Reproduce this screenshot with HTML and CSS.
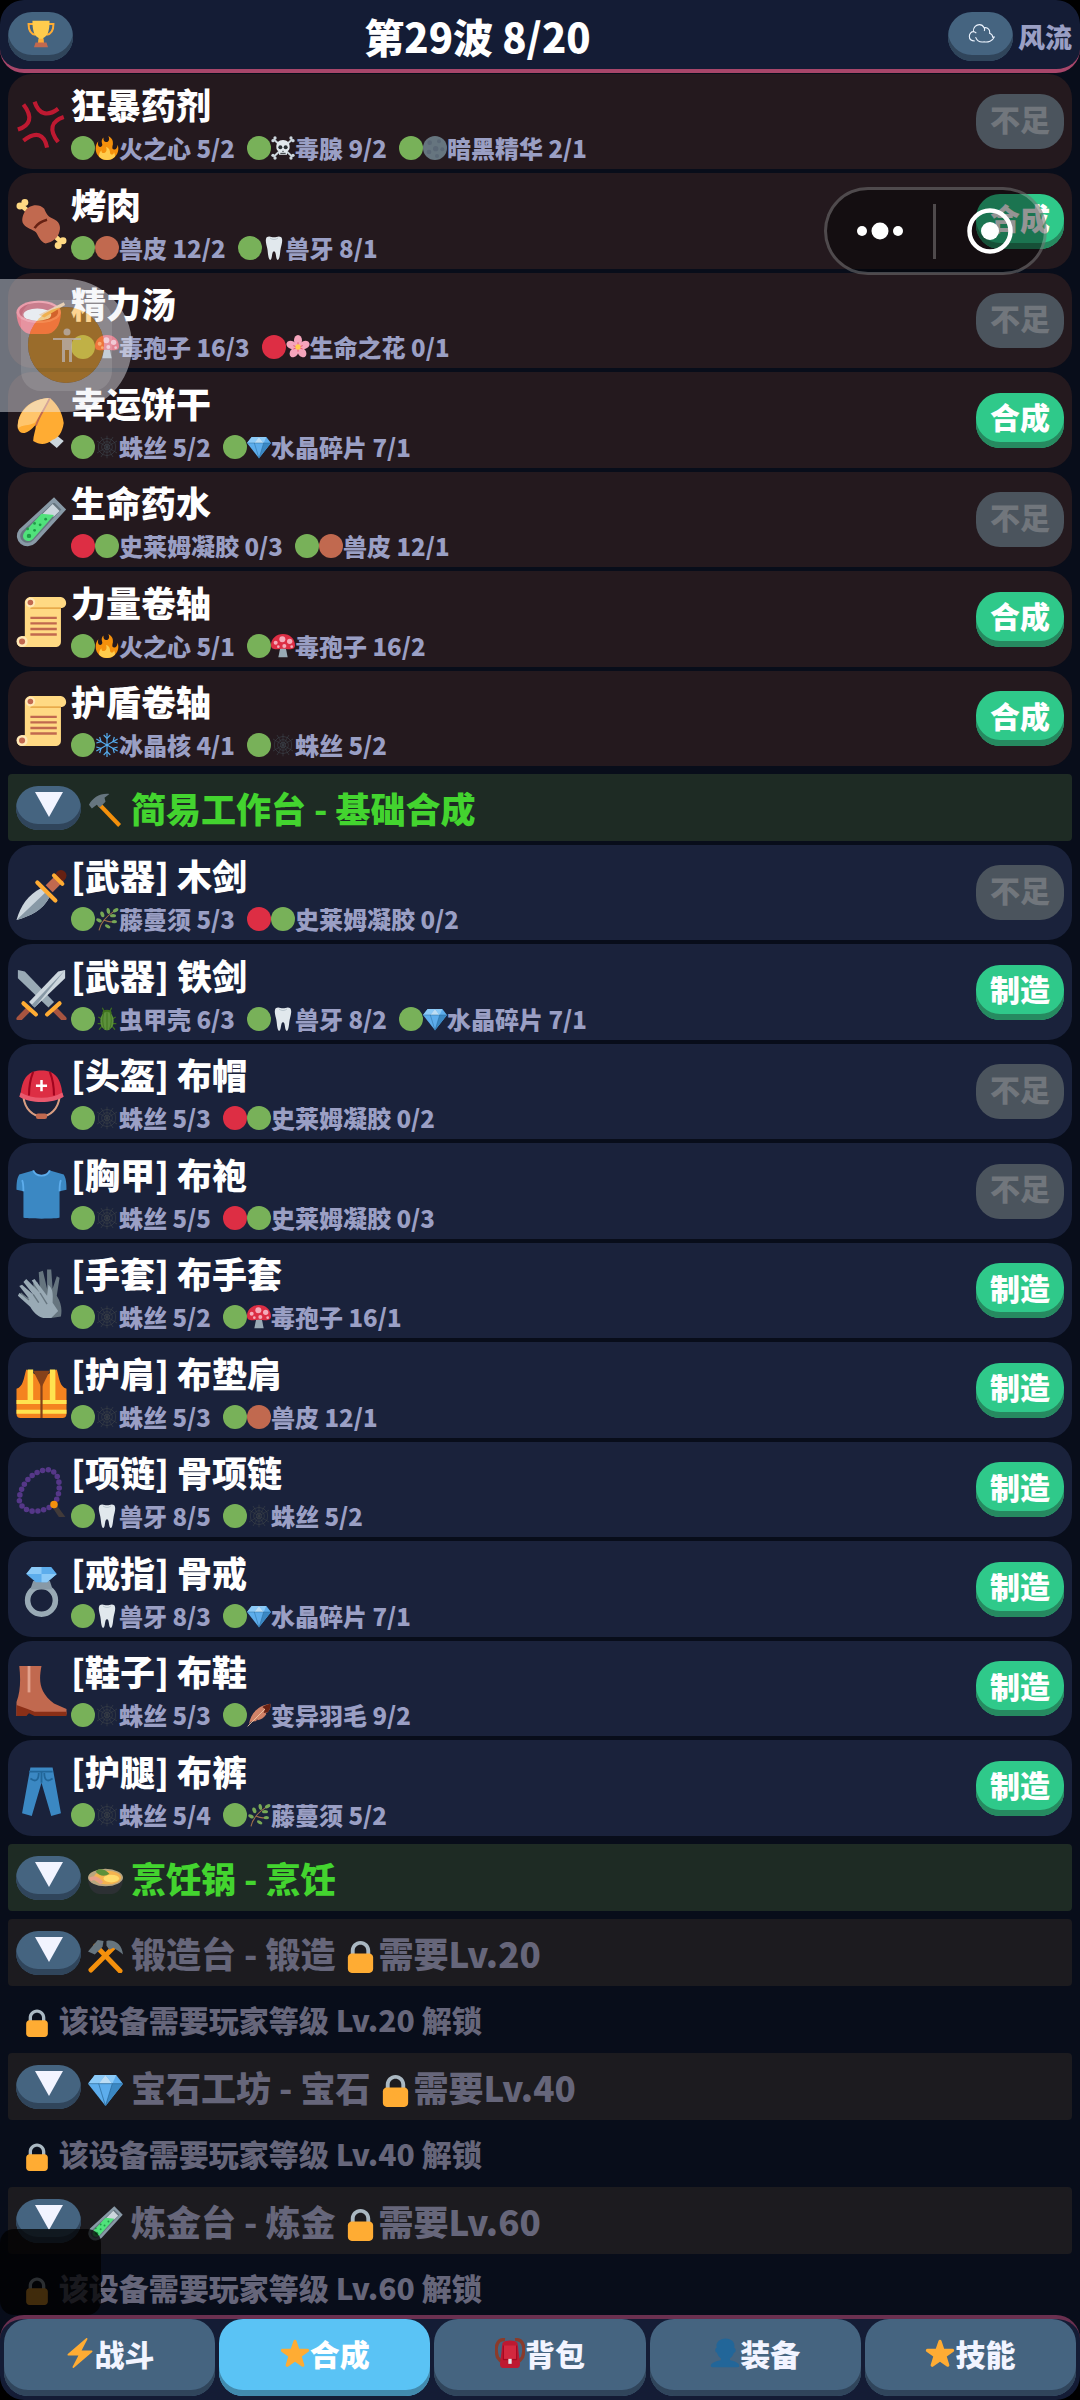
FILE: index.html
```html
<!DOCTYPE html>
<html lang="zh-CN">
<head>
<meta charset="utf-8">
<meta name="viewport" content="width=device-width, initial-scale=1">
<title>第29波 - 合成</title>
<link rel="stylesheet" href="styles.css">
</head>
<body>
<svg class="sprite" aria-hidden="true">
  <symbol id="trophy" viewBox="0 0 36 36"><path d="M8 5H2c0 9 3 13 9 14M28 5h6c0 9-3 13-9 14" fill="none" stroke="#ffac33" stroke-width="2.6"/><path d="M7 1h22c0 12-2 20-8 22v5h-6v-5C9 21 7 13 7 1z" fill="#ffcc4d"/><path d="M15 24h6l1 6h-8z" fill="#ffac33"/><path d="M11 29h14l2 6H9z" fill="#c1694f"/></symbol>
  <symbol id="cloud" viewBox="0 0 36 36"><path d="M10 27c-4 0-7-2-7-6s3-6 5-6c0-6 4-9 8-9 3 0 5 2 6 4 5-1 8 3 7 7 3 1 4 3 4 5l2 0c-2 5-8 7-13 6-5 1-9-1-11-6M8 15c2 0 3 1 4 2M22 10c1 2 1 3 0 4" fill="none" stroke="#eef5ff" stroke-width="1.4"/></symbol>
  <symbol id="tri" viewBox="0 0 28 25"><path d="M0 0h28L14 25z" fill="#f2f4ff"/></symbol>
  <symbol id="anger" viewBox="0 0 36 36"><g fill="none" stroke="#be1931" stroke-width="3"><path d="M13 2c3 9 9 11 17 5"/><path d="M34 13c-9 3-11 9-4 18"/><path d="M22 35c-2-10-8-12-17-5"/><path d="M1 22c9-3 11-9 4-18"/></g></symbol>
  <symbol id="meat" viewBox="0 0 36 36"><path d="M4 5l8 7M26 25l7 7" stroke="#ffd983" stroke-width="3.4"/><g fill="#ffd983"><circle cx="2.500" cy="5" r="2.500"/><circle cx="6" cy="2.500" r="2.500"/><circle cx="33.500" cy="30" r="2.500"/><circle cx="30" cy="33.500" r="2.500"/></g><path d="M6 9c3-5 10-6 14-2 1 3 3 6 6 7 5 2 6 6 5 9-1 5-5 8-10 9-4-1-5-5-7-8-2-2-7-3-9-6-2-3 0-7 1-9z" fill="#c1694f"/><path d="M13 21c2-3 5-5 9-6" fill="none" stroke="#662113" stroke-width="1.8"/></symbol>
  <symbol id="bowl" viewBox="0 0 36 36"><path d="M0 10h32c0 10-5 16-11 16H11C5 26 0 20 0 10z" fill="#dd2e44"/><ellipse cx="16" cy="10" rx="16" ry="8" fill="#ea596e"/><ellipse cx="16" cy="10" rx="14" ry="6.500" fill="#a0041e"/><ellipse cx="15" cy="12" rx="10" ry="4.500" fill="#e1e8ed"/><path d="M16 12L34 3l1 2-15 9z" fill="#e0b070"/></symbol>
  <symbol id="cookie" viewBox="0 0 36 36"><path d="M22 30l7-3 5 4-5 5z" fill="#ccd6dd"/><path d="M1 22C0 10 10 0 24 0c5 4 9 10 10 18-1 7-4 11-8 12-5 4-9 4-14 1 0-4 2-8 2-12-5 6-11 9-13 3z" fill="#ffac33"/><path d="M24 0C12 0 0 10 1 22c3-3 8-2 12-4C17 13 20 7 24 0z" fill="#ffc56b"/><path d="M24 0c-3 7-8 13-10 20" fill="none" stroke="#c1694f" stroke-width="1.300"/></symbol>
  <symbol id="tube" viewBox="0 0 36 36"><path d="M27 2l7 7-21 23c-6 6-15-1-10-8z" fill="#66757f" stroke="#8899a6" stroke-width="2.500"/><path d="M26 5l5 5-4 4-9-1z" fill="#ccd6dd"/><path d="M18 12l9 1-15 17c-4 4-10 0-6-5z" fill="#50e27b"/><g fill="#1f9b48"><circle cx="9" cy="28" r="1.600"/><circle cx="13" cy="24" r="1"/><circle cx="17" cy="20" r="1"/><circle cx="13" cy="19" r="1"/><circle cx="21" cy="16" r="1"/><circle cx="8" cy="23" r="1"/></g></symbol>
  <symbol id="scroll" viewBox="0 0 36 36"><path d="M10 0h22c5 1 5 8 0 8v24c0 3-2 4-4 4H4c-5 0-5-8 2-8V4c0-2 2-4 4-4z" fill="#ffd983"/><path d="M10 8h22" stroke="#e39f3d"/><circle cx="10" cy="4" r="3.500" fill="#ffe8b6"/><circle cx="10" cy="4" r="2" fill="#c1694f"/><circle cx="4" cy="32" r="4" fill="#ffe8b6"/><circle cx="4" cy="32" r="2.200" fill="#c1694f"/><path d="M10 15h19M10 19h19M10 23h19M10 27h19" stroke="#c1694f" stroke-width="1.700"/></symbol>
  <symbol id="fire" viewBox="0 0 36 36"><path fill="#f4900c" d="M35 19c0-2.062-.367-4.039-1.040-5.868-.46 5.389-3.333 8.157-6.335 6.868-2.812-1.208-.917-5.917-.777-8.164.236-3.809-.012-8.169-6.931-11.794 2.875 5.500.333 8.917-2.333 9.125-2.958.231-5.667-2.542-4.667-7.042-3.238 2.386-3.332 6.402-2.333 9 1.042 2.708-.042 4.958-2.583 5.208-2.840.28-4.418-3.041-2.963-8.333C2.520 10.965 1 14.805 1 19c0 9.389 7.611 17 17 17s17-7.611 17-17z"/><path fill="#ffcc4d" d="M28.394 23.999c.148 3.084-2.561 4.293-4.019 3.709-2.106-.843-1.541-2.291-2.083-5.291s-2.625-5.083-5.708-6c2.250 6.333-1.247 8.667-3.080 9.084-1.872.426-3.753-.001-3.968-4.007C7.352 23.668 6 26.676 6 30c0 .368.023.73.055 1.090C9.125 34.124 13.342 36 18 36s8.875-1.876 11.945-4.910c.032-.36.055-.722.055-1.090 0-2.187-.584-4.236-1.606-6.001z"/></symbol>
  <symbol id="skull" viewBox="0 0 36 36"><path d="M4 5l28 26M32 5L4 31" stroke="#ccd6dd" stroke-width="3"/><g fill="#ccd6dd"><circle cx="3" cy="7" r="2.500"/><circle cx="6" cy="3" r="2.500"/><circle cx="33" cy="7" r="2.500"/><circle cx="30" cy="3" r="2.500"/><circle cx="3" cy="29" r="2.500"/><circle cx="6" cy="33" r="2.500"/><circle cx="33" cy="29" r="2.500"/><circle cx="30" cy="33" r="2.500"/></g><path d="M18 6c7 0 10 5 10 10 0 4-1 6-4 7v5H12v-5c-3-1-4-3-4-7 0-5 3-10 10-10z" fill="#e1e8ed"/><circle cx="14" cy="17" r="3" fill="#292f33"/><circle cx="22" cy="17" r="3" fill="#292f33"/><path d="M17 23h2M14 26h8" stroke="#292f33" stroke-width="1.500"/></symbol>
  <symbol id="moon" viewBox="0 0 36 36"><circle cx="18" cy="18" r="18" fill="#66757f"/><g fill="#5b6876"><circle cx="10" cy="10" r="3.500"/><circle cx="24" cy="8" r="3"/><circle cx="19" cy="19" r="4"/><circle cx="29" cy="20" r="3"/><circle cx="9" cy="24" r="3.500"/><circle cx="21" cy="30" r="3"/></g></symbol>
  <symbol id="tooth" viewBox="0 0 36 36"><path d="M7 2c4-3 7 0 11 0s7-3 11 0c3 4 0 12-1 17s-1 15-4 17c-4 0-2-13-6-13s-2 13-6 13c-3-2-3-12-4-17S4 6 7 2z" fill="#e1e8ed"/><path d="M12 3c4 3 8 3 12 0" fill="none" stroke="#bdc9d1" stroke-width="1.500"/></symbol>
  <symbol id="mushroom" viewBox="0 0 36 36"><path d="M14 20h8l3 15H11z" fill="#99aab5"/><path d="M0 17C0 7 8 0 18 0s18 7 18 17c0 9-13 5-18 5S0 26 0 17z" fill="#dd2e44"/><g fill="#f4abba"><circle cx="17" cy="8" r="4.500"/><circle cx="7" cy="13" r="3"/><circle cx="28" cy="11" r="4"/><circle cx="20" cy="18" r="3"/><circle cx="11" cy="19" r="2"/><circle cx="31" cy="19" r="2"/></g></symbol>
  <symbol id="blossom" viewBox="0 0 36 36"><g fill="#f5a4bb"><ellipse cx="18" cy="8" rx="6" ry="8"/><ellipse cx="18" cy="8" rx="6" ry="8" transform="rotate(72 18 18)"/><ellipse cx="18" cy="8" rx="6" ry="8" transform="rotate(144 18 18)"/><ellipse cx="18" cy="8" rx="6" ry="8" transform="rotate(216 18 18)"/><ellipse cx="18" cy="8" rx="6" ry="8" transform="rotate(288 18 18)"/></g><path d="M18 11v14M11 16l14 5M25 16l-14 5" stroke="#ea596e" stroke-width="1.500"/><circle cx="18" cy="18" r="4" fill="#ffcc4d"/></symbol>
  <symbol id="web" viewBox="0 0 36 36"><g fill="none" stroke="#3a4047" stroke-width="1"><path d="M18 1v34M3 9l30 18M3 27L33 9M9 3l18 30M27 3L9 33"/><circle cx="18" cy="18" r="4"/><circle cx="18" cy="18" r="8"/><path d="M18 5l7 2 5 5 1 6-1 6-5 5-7 2-7-2-5-5-1-6 1-6 5-5z"/></g></symbol>
  <symbol id="gem" viewBox="0 0 36 36"><path d="M7 3h22l7 9-18 23L0 12z" fill="#5dadec"/><path d="M7 3h11l-7 9H0z" fill="#8ccaf7"/><path d="M18 3l7 9H11z" fill="#bdddf4"/><path d="M18 3h11l-4 9z" fill="#8ccaf7"/><path d="M11 12h14l-7 23z" fill="#5dadec"/><path d="M25 12h11L18 35z" fill="#3b88c3"/><path d="M0 12h36M11 12l7 23 7-23" fill="none" stroke="#2a6797" stroke-width=".7"/></symbol>
  <symbol id="snow" viewBox="0 0 36 36"><g fill="none" stroke="#55acee" stroke-width="1.800"><path d="M18 0v36M2 9l32 18M2 27L34 9"/><path d="M13 3l5 5 5-5M13 33l5-5 5 5M2 15l7-2-2-7M34 21l-7 2 2 7M2 21l7 2-2 7M34 15l-7-2 2-7"/></g></symbol>
  <symbol id="herb" viewBox="0 0 36 36"><path d="M6 35c2-9 8-19 22-28M14 20c5 2 8 3 12 2" fill="none" stroke="#a0714a" stroke-width="1.600"/><g fill="#77a856"><ellipse cx="6" cy="20" rx="4.500" ry="2.600" transform="rotate(25 6 20)"/><ellipse cx="11" cy="11" rx="2.800" ry="4.500" transform="rotate(-20 11 11)"/><ellipse cx="20" cy="6" rx="2.600" ry="4.500" transform="rotate(-10 20 6)"/><ellipse cx="31" cy="5" rx="4.500" ry="2.600" transform="rotate(-30 31 5)"/><ellipse cx="27" cy="13" rx="4.500" ry="2.400"/><ellipse cx="19" cy="29" rx="4.500" ry="2.400" transform="rotate(30 19 29)"/><ellipse cx="29" cy="22" rx="4" ry="2.400"/></g></symbol>
  <symbol id="beetle" viewBox="0 0 36 36"><path d="M11 1l3 6M25 1l-3 6M5 15l5 3M31 15l-5 3M4 25h6M32 25h-6M6 34l5-6M30 34l-5-6" stroke="#3e721d" stroke-width="1.800"/><ellipse cx="18" cy="9" rx="7" ry="5" fill="#3e721d"/><ellipse cx="18" cy="21" rx="10" ry="14" fill="#5c913b"/><path d="M18 8v27M13 9c-2 8-2 16 1 24M23 9c2 8 2 16-1 24" fill="none" stroke="#3e721d" stroke-width="1.300"/></symbol>
  <symbol id="feather" viewBox="0 0 36 36"><path d="M3 32C5 17 15 4 35 1c1 7-2 10-4 13l-3 1 1 2c-4 6-8 8-13 9l-1-2-1 3c-3 1-5 1-8 1z" fill="#d08268"/><path d="M35 1c1 7-2 10-4 13l-6 1 2-6-4-3c4-3 8-4 12-5z" fill="#662113"/><path d="M1 35L27 9" stroke="#f0c9a6" stroke-width="1.300"/></symbol>
  <symbol id="hammer" viewBox="0 0 36 36"><path d="M13 10l21 22-3 3L10 13z" fill="#f4900c"/><path d="M1 12C5 5 12 0 22 1l-5 4 1 4-6 6-3-3-5 4z" fill="#66757f"/></symbol>
  <symbol id="picks" viewBox="0 0 36 36"><path d="M8 8l25 26M27 9L3 33" stroke="#f4900c" stroke-width="5" stroke-linecap="round"/><path d="M0 14L10 2l6 1-1 6-8 8z" fill="#66757f"/><path d="M19 3c9-2 16 4 17 14-3-3-7-5-10-7l-4 2-3-4z" fill="#66757f"/></symbol>
  <symbol id="pot" viewBox="0 0 36 36"><path d="M0 16h36c0 9-5 15-11 16H11C5 31 0 25 0 16z" fill="#2c3033"/><ellipse cx="18" cy="15" rx="18" ry="9" fill="#b9a680"/><ellipse cx="20" cy="15" rx="14" ry="7" fill="#f4b350"/><ellipse cx="24" cy="16" rx="8" ry="4" fill="#ffdc6c"/><path d="M8 9c3-4 9-3 14 2-4 3-10 3-14-2z" fill="#5c913b"/><path d="M2 17c5-3 9 0 12 4" fill="none" stroke="#e6a08a" stroke-width="4"/></symbol>
  <symbol id="lock" viewBox="0 0 36 36"><path fill="#aab8c2" d="M18 3C12.477 3 8 7.477 8 13v10h4V13c0-3.313 2.686-6 6-6s6 2.687 6 6v10h4V13c0-5.523-4.477-10-10-10z"/><path fill="#ffac33" d="M31 32c0 2.209-1.791 4-4 4H9c-2.209 0-4-1.791-4-4V20c0-2.209 1.791-4 4-4h18c2.209 0 4 1.791 4 4v12z"/></symbol>
  <symbol id="dagger" viewBox="0 0 36 36"><path d="M18 13l6 6C19 29 10 33 0 36 3 26 8 18 18 13z" fill="#ccd6dd"/><path d="M21 16l3 3C19 29 10 33 0 36z" fill="#8899a6"/><path d="M21 11L29 3l5 5-8 8z" fill="#c1694f"/><circle cx="32" cy="4" r="4" fill="#662113"/><path d="M15 9l13 13M27 4l6 6" stroke="#ffac33" stroke-width="3" stroke-linecap="round"/></symbol>
  <symbol id="swords" viewBox="0 0 36 36"><path d="M1 0l5 1 21 22-4 4L1 6z" fill="#99aab5"/><path d="M35 0l-5 1L9 23l4 4L35 6z" fill="#ccd6dd"/><path d="M35 0L13 27l-2-2z" fill="#8899a6"/><path d="M8 29l-6 6M28 29l6 6" stroke="#a75440" stroke-width="4" stroke-linecap="round"/><path d="M5 24l9 8M31 24l-9 8" stroke="#ffac33" stroke-width="3" stroke-linecap="round"/></symbol>
  <symbol id="helmet" viewBox="0 0 36 36"><path d="M5 20c1 9 7 14 13 14s12-5 13-14" fill="none" stroke="#d99e82" stroke-width="1.500"/><rect x="14" y="32" width="8" height="4" rx="1.500" fill="#c1694f"/><path d="M3 18C4 6 9 1 18 1s14 5 15 17c-8 5-22 5-30 0z" fill="#dd2e44"/><path d="M3 17c8 5 22 5 30 0l1 3c-8 5-24 5-32 0z" fill="#ea596e"/><path d="M12 2c-2 5-3 11-3 17M24 2c2 5 3 11 3 17" fill="none" stroke="#a0041e" stroke-width="1.500"/><path d="M18 8v8M14 12h8" stroke="#fff" stroke-width="1.800"/></symbol>
  <symbol id="shirt" viewBox="0 0 36 36"><path d="M12 1c2 5 10 5 12 0l10 3c2 3 2 8 2 11l-5 1V35c0 1-26 1-26 0V16l-5-1c0-3 0-8 2-11z" fill="#3b88c3"/><path d="M12 1c2 5 10 5 12 0M5 16c0-4 0-6-1-8M31 16c0-4 0-6 1-8" fill="none" stroke="#5dadec" stroke-width="1.300"/></symbol>
  <symbol id="gloves" viewBox="0 0 36 36"><path d="M13 20l-1-9 3-1 2 7-1-14 3-1 3 13V1h3l1 14 3-9 2 1-2 13c3 5 4 9 3 15l-7 1z" fill="#66757f"/><path d="M2 13l2-1 8 7-7-9 2-2 10 10-6-9 2-1 9 12 1-8c4 4 3 8 3 13l4 6-6 6c-8-1-11-4-14-9L1 20l1-2 7 4z" fill="#99aab5"/><path d="M9 23L3 18M12 19l4 6M17 18l5 8" stroke="#66757f" stroke-width="1"/></symbol>
  <symbol id="vest" viewBox="0 0 36 36"><path d="M7 1l11 6L29 1c2 7 2 12 7 14v18c0 2-1 3-3 3H3c-2 0-3-1-3-3V15C5 13 5 8 7 1z" fill="#f4831f"/><path d="M12 2h12l-6 12z" fill="#85411a"/><path d="M8 1h4v22H8zM24 1h4v22h-4zM0 23h36v3H0zM0 30h36v3H0z" fill="#ffe34f"/><path d="M18 12v24" stroke="#85411a" stroke-width="1.600"/></symbol>
  <symbol id="beads" viewBox="0 0 36 36"><path d="M27 27c6-9 5-24-4-25C11 2 2 14 2 24c3 11 17 9 25 3" fill="none" stroke="#553788" stroke-width="4" stroke-dasharray="0 4.200" stroke-linecap="round"/><path d="M28 28l6 8-3-1-4-6z" fill="#413a39" stroke="#413a39" stroke-width="2"/><circle cx="27" cy="27" r="2.700" fill="#f4900c"/></symbol>
  <symbol id="ring" viewBox="0 0 36 36"><circle cx="18" cy="24" r="10" fill="none" stroke="#99aab5" stroke-width="4"/><path d="M12 10h12l2 6H10z" fill="#8899a6"/><path d="M11 0h14l4 5-7 6h-8L7 5z" fill="#5dadec"/><path d="M11 0h7v5H7zM18 5h11l-7 6h-4z" fill="#8ccaf7"/></symbol>
  <symbol id="boot" viewBox="0 0 36 36"><path d="M2 0h16c-2 10-2 19 9 27l9 4v4H13l-3-3-3 1v4H0V26c3-8 3-17 2-26z" fill="#c1694f"/><path d="M0 28l8 3 5 2h23v3H13l-4-2-2 2H0z" fill="#8a2f17"/><path d="M9 0v19" stroke="#e3a28d" stroke-width="2"/></symbol>
  <symbol id="jeans" viewBox="0 0 36 36"><path d="M10 1h16l6 33-7 2-7-24-7 24-7-2z" fill="#3b88c3"/><path d="M9 4h17M18 4v8M10 9c4 3 6 1 6-4M26 9c-4 3-6 1-6-4" fill="none" stroke="#226699" stroke-width="1.300"/></symbol>
  <symbol id="bolt" viewBox="0 0 36 36"><path fill="#ffac33" d="M32.938 15.651C32.792 15.260 32.418 15 32 15H19.925L26.890 1.458c.219-.426.106-.947-.271-1.243C26.437.071 26.218 0 26 0c-.233 0-.466.082-.653.243L18 6.588 3.347 19.243c-.316.273-.43.714-.284 1.105S3.582 21 4 21h12.075L9.110 34.542c-.219.426-.106.947.271 1.243.182.144.401.215.619.215.233 0 .466-.082.653-.243L18 29.412l14.653-12.655c.317-.273.43-.714.285-1.106z"/></symbol>
  <symbol id="star" viewBox="0 0 36 36"><path fill="#ffac33" d="M27.287 34.627c-.404 0-.806-.124-1.152-.371L18 28.422l-8.135 5.834a1.970 1.970 0 0 1-2.312-.008 1.971 1.971 0 0 1-.721-2.194l3.034-9.792-8.062-5.681a1.980 1.980 0 0 1-.708-2.203 1.978 1.978 0 0 1 1.866-1.363L12.947 13l3.179-9.549a1.976 1.976 0 0 1 3.749 0L23 13l10.036.015a1.975 1.975 0 0 1 1.159 3.566l-8.062 5.681 3.034 9.792a1.970 1.970 0 0 1-.720 2.194 1.957 1.957 0 0 1-1.160.379z"/></symbol>
  <symbol id="bag" viewBox="0 0 36 36"><path d="M12 2C3 1-1 10 3 23l4 5M24 2c9-1 13 8 9 21l-4 5" fill="none" stroke="#8a3b2b" stroke-width="4"/><path d="M9 6c3-4 15-4 18 0l3 25c0 3-1 5-3 5H9c-2 0-3-2-3-5z" fill="#be1931"/><path d="M10 9h16v16H10z" fill="#d3283f"/><path d="M10 9v17h16V9" fill="none" stroke="#a0041e" stroke-width="1.200"/><rect x="16" y="25" width="4" height="6" fill="#e1e8ed"/></symbol>
  <symbol id="person" viewBox="0 0 36 36"><path fill="#226699" d="M24 26.799v-2.566c2-1.348 4.080-3.779 4.703-6.896.186.103.206.17.413.17.991 0 1.709-1.287 1.709-2.873 0-1.562-.823-2.827-1.794-2.865.187-.674.293-1.577.293-2.735C29.324 5.168 26 .527 18.541.527c-6.629 0-10.777 4.641-10.777 8.507 0 1.123.069 2.043.188 2.755-.911.137-1.629 1.352-1.629 2.845 0 1.587.804 2.873 1.796 2.873.206 0 .025-.067.209-.17C8.952 20.453 11 22.885 13 24.232v2.414c-5 .645-12 3.437-12 6.230v1.061C1 35 2.076 35 3.137 35h29.725C33.924 35 35 35 35 33.938v-1.061c0-2.615-6-5.225-11-6.078z"/></symbol>
</svg>

<div class="app">
  <header class="topbar">
    <button class="btn round" aria-label="排行榜"><svg><use href="#trophy"/></svg></button>
    <h1>第29波 8/20</h1>
    <button class="btn round" aria-label="云存档"><svg><use href="#cloud"/></svg></button>
    <span class="user">风流</span>
  </header>

  <main>
    <ul class="recipes food">
      <li><svg class="pic"><use href="#anger"/></svg><div class="info"><h3>狂暴药剂</h3><p><span><i class="dot"></i><svg><use href="#fire"/></svg>火之心 5/2</span><span><i class="dot"></i><svg><use href="#skull"/></svg>毒腺 9/2</span><span><i class="dot"></i><svg><use href="#moon"/></svg>暗黑精华 2/1</span></p></div><button class="btn make" disabled>不足</button></li>
      <li><svg class="pic"><use href="#meat"/></svg><div class="info"><h3>烤肉</h3><p><span><i class="dot"></i><i class="dot hide"></i>兽皮 12/2</span><span><i class="dot"></i><svg><use href="#tooth"/></svg>兽牙 8/1</span></p></div><button class="btn make">合成</button></li>
      <li><svg class="pic"><use href="#bowl"/></svg><div class="info"><h3>精力汤</h3><p><span><i class="dot"></i><svg><use href="#mushroom"/></svg>毒孢子 16/3</span><span><i class="dot lack"></i><svg><use href="#blossom"/></svg>生命之花 0/1</span></p></div><button class="btn make" disabled>不足</button></li>
      <li><svg class="pic"><use href="#cookie"/></svg><div class="info"><h3>幸运饼干</h3><p><span><i class="dot"></i><svg><use href="#web"/></svg>蛛丝 5/2</span><span><i class="dot"></i><svg><use href="#gem"/></svg>水晶碎片 7/1</span></p></div><button class="btn make">合成</button></li>
      <li><svg class="pic"><use href="#tube"/></svg><div class="info"><h3>生命药水</h3><p><span><i class="dot lack"></i><i class="dot"></i>史莱姆凝胶 0/3</span><span><i class="dot"></i><i class="dot hide"></i>兽皮 12/1</span></p></div><button class="btn make" disabled>不足</button></li>
      <li><svg class="pic"><use href="#scroll"/></svg><div class="info"><h3>力量卷轴</h3><p><span><i class="dot"></i><svg><use href="#fire"/></svg>火之心 5/1</span><span><i class="dot"></i><svg><use href="#mushroom"/></svg>毒孢子 16/2</span></p></div><button class="btn make">合成</button></li>
      <li><svg class="pic"><use href="#scroll"/></svg><div class="info"><h3>护盾卷轴</h3><p><span><i class="dot"></i><svg><use href="#snow"/></svg>冰晶核 4/1</span><span><i class="dot"></i><svg><use href="#web"/></svg>蛛丝 5/2</span></p></div><button class="btn make">合成</button></li>
    </ul>

    <section>
      <div class="station"><button class="btn toggle" aria-label="展开"><svg><use href="#tri"/></svg></button><h2><svg><use href="#hammer"/></svg> 简易工作台 - 基础合成</h2></div>
      <ul class="recipes gear">
        <li><svg class="pic"><use href="#dagger"/></svg><div class="info"><h3>[武器] 木剑</h3><p><span><i class="dot"></i><svg><use href="#herb"/></svg>藤蔓须 5/3</span><span><i class="dot lack"></i><i class="dot"></i>史莱姆凝胶 0/2</span></p></div><button class="btn make" disabled>不足</button></li>
        <li><svg class="pic"><use href="#swords"/></svg><div class="info"><h3>[武器] 铁剑</h3><p><span><i class="dot"></i><svg><use href="#beetle"/></svg>虫甲壳 6/3</span><span><i class="dot"></i><svg><use href="#tooth"/></svg>兽牙 8/2</span><span><i class="dot"></i><svg><use href="#gem"/></svg>水晶碎片 7/1</span></p></div><button class="btn make">制造</button></li>
        <li><svg class="pic"><use href="#helmet"/></svg><div class="info"><h3>[头盔] 布帽</h3><p><span><i class="dot"></i><svg><use href="#web"/></svg>蛛丝 5/3</span><span><i class="dot lack"></i><i class="dot"></i>史莱姆凝胶 0/2</span></p></div><button class="btn make" disabled>不足</button></li>
        <li><svg class="pic"><use href="#shirt"/></svg><div class="info"><h3>[胸甲] 布袍</h3><p><span><i class="dot"></i><svg><use href="#web"/></svg>蛛丝 5/5</span><span><i class="dot lack"></i><i class="dot"></i>史莱姆凝胶 0/3</span></p></div><button class="btn make" disabled>不足</button></li>
        <li><svg class="pic"><use href="#gloves"/></svg><div class="info"><h3>[手套] 布手套</h3><p><span><i class="dot"></i><svg><use href="#web"/></svg>蛛丝 5/2</span><span><i class="dot"></i><svg><use href="#mushroom"/></svg>毒孢子 16/1</span></p></div><button class="btn make">制造</button></li>
        <li><svg class="pic"><use href="#vest"/></svg><div class="info"><h3>[护肩] 布垫肩</h3><p><span><i class="dot"></i><svg><use href="#web"/></svg>蛛丝 5/3</span><span><i class="dot"></i><i class="dot hide"></i>兽皮 12/1</span></p></div><button class="btn make">制造</button></li>
        <li><svg class="pic"><use href="#beads"/></svg><div class="info"><h3>[项链] 骨项链</h3><p><span><i class="dot"></i><svg><use href="#tooth"/></svg>兽牙 8/5</span><span><i class="dot"></i><svg><use href="#web"/></svg>蛛丝 5/2</span></p></div><button class="btn make">制造</button></li>
        <li><svg class="pic"><use href="#ring"/></svg><div class="info"><h3>[戒指] 骨戒</h3><p><span><i class="dot"></i><svg><use href="#tooth"/></svg>兽牙 8/3</span><span><i class="dot"></i><svg><use href="#gem"/></svg>水晶碎片 7/1</span></p></div><button class="btn make">制造</button></li>
        <li><svg class="pic"><use href="#boot"/></svg><div class="info"><h3>[鞋子] 布鞋</h3><p><span><i class="dot"></i><svg><use href="#web"/></svg>蛛丝 5/3</span><span><i class="dot"></i><svg><use href="#feather"/></svg>变异羽毛 9/2</span></p></div><button class="btn make">制造</button></li>
        <li><svg class="pic"><use href="#jeans"/></svg><div class="info"><h3>[护腿] 布裤</h3><p><span><i class="dot"></i><svg><use href="#web"/></svg>蛛丝 5/4</span><span><i class="dot"></i><svg><use href="#herb"/></svg>藤蔓须 5/2</span></p></div><button class="btn make">制造</button></li>
      </ul>
    </section>

    <section>
      <div class="station"><button class="btn toggle" aria-label="展开"><svg><use href="#tri"/></svg></button><h2><svg><use href="#pot"/></svg> 烹饪锅 - 烹饪</h2></div>
    </section>
    <section class="locked">
      <div class="station"><button class="btn toggle" aria-label="展开"><svg><use href="#tri"/></svg></button><h2><svg><use href="#picks"/></svg> 锻造台 - 锻造 <svg><use href="#lock"/></svg>需要Lv.20</h2></div>
      <p class="note"><svg><use href="#lock"/></svg> 该设备需要玩家等级 Lv.20 解锁</p>
    </section>
    <section class="locked">
      <div class="station"><button class="btn toggle" aria-label="展开"><svg><use href="#tri"/></svg></button><h2><svg><use href="#gem"/></svg> 宝石工坊 - 宝石 <svg><use href="#lock"/></svg>需要Lv.40</h2></div>
      <p class="note"><svg><use href="#lock"/></svg> 该设备需要玩家等级 Lv.40 解锁</p>
    </section>
    <section class="locked">
      <div class="station"><button class="btn toggle" aria-label="展开"><svg><use href="#tri"/></svg></button><h2><svg><use href="#tube"/></svg> 炼金台 - 炼金 <svg><use href="#lock"/></svg>需要Lv.60</h2></div>
      <p class="note"><svg><use href="#lock"/></svg> 该设备需要玩家等级 Lv.60 解锁</p>
    </section>
  </main>

  <nav class="tabs">
    <button class="btn"><svg><use href="#bolt"/></svg>战斗</button>
    <button class="btn active" aria-current="page"><svg><use href="#star"/></svg>合成</button>
    <button class="btn"><svg><use href="#bag"/></svg>背包</button>
    <button class="btn"><svg><use href="#person"/></svg>装备</button>
    <button class="btn"><svg><use href="#star"/></svg>技能</button>
  </nav>

  <div class="capsule">
    <button aria-label="更多"><svg width="46" height="18" viewBox="0 0 46 18"><g fill="#fff"><circle cx="5" cy="9" r="5"/><circle cx="23" cy="9" r="8.500"/><circle cx="41" cy="9" r="5"/></g></svg></button>
    <button aria-label="关闭"><svg width="46" height="46" viewBox="0 0 46 46"><circle cx="23" cy="23" r="20.500" fill="none" stroke="#fff" stroke-width="4.500"/><circle cx="23" cy="23" r="9" fill="#fff"/></svg></button>
  </div>

  <button class="assist" aria-label="无障碍">
    <svg viewBox="0 0 132 133" fill-rule="evenodd">
      <path d="M0 0h66a66 66.500 0 0 1 0 133H0zM28 66a38 38 0 1 0 76 0 38 38 0 1 0-76 0z" fill="#ebeef5" fill-opacity=".45"/>
      <path d="M41 21h51a20 20 0 0 1 20 20v51a20 20 0 0 1-20 20H41a20 20 0 0 1-20-20V41a20 20 0 0 1 20-20zM28 66a38 38 0 1 0 76 0 38 38 0 1 0-76 0z" fill="#fff" fill-opacity=".12"/>
      <circle cx="66" cy="66" r="38" fill="#fcb037" fill-opacity=".55"/>
      <g fill="#b9b3b4" fill-opacity=".75"><circle cx="67" cy="53" r="3.500"/><path d="M53 59h28v2h-9v22h-3V71h-4v12h-3V61h-9z"/></g>
    </svg>
  </button>
  <div class="shade"></div>
</div>
</body>
</html>
```
FILE: styles.css
```css
* { box-sizing: border-box; margin: 0; padding: 0; }

body {
  background: #000;
  font-family: "Noto Sans CJK SC", "Noto Sans", sans-serif;
  font-weight: 900;
  color: #fff;
}

h1, h2, h3, button { font: inherit; }
ul { list-style: none; }
.sprite { position: absolute; width: 0; height: 0; }

.app {
  position: relative;
  display: flex;
  flex-direction: column;
  height: 100vh;
  overflow: hidden;
  border-radius: 24px;
  background: #080d1a;
}

/* Raised pill button shared by every control */
.btn {
  display: flex;
  align-items: center;
  justify-content: center;
  border: 0;
  border-radius: 24px;
  background: #456480;
  box-shadow: inset 0 -6px #30455b;
  padding-bottom: 6px;
  color: #f2f4ff;
  font-size: 30px;
  line-height: 40px;
}

/* Top bar */
.topbar {
  flex: none;
  display: flex;
  align-items: center;
  gap: 5px;
  padding: 12px 8px 8px;
  border-bottom: 4px solid #a8466a;
  border-radius: 24px;
  background: #141c35;
}
.topbar h1 {
  flex: 1;
  padding-right: 66px;
  text-align: center;
  font-size: 40px;
  line-height: 49px;
}
.round { width: 65px; height: 49px; }
.round svg { width: 28px; height: 28px; }
.user { color: #9a9fc4; font-size: 27px; line-height: 49px; }

/* Scrolling list */
main {
  flex: 1;
  min-height: 0;
  overflow-y: auto;
  scrollbar-width: none;
  padding: 1px 8px 0;
}

.recipes { display: grid; gap: 4px; }
.recipes li {
  display: flex;
  align-items: center;
  min-height: 95px;
  padding: 0 8px;
  border-radius: 24px;
}
.recipes li:nth-child(even) { min-height: 96px; }
.food li { background: #24191e; }
.gear li { background: #1a223b; }

.pic { flex: none; width: 51px; height: 50px; margin: 5px 4px 0 0; }
.info { flex: 1; }
.info h3 { font-size: 35px; line-height: 53px; }
.info p {
  display: flex;
  gap: 12px;
  color: #9a9fc4;
  font-size: 24px;
  line-height: 36px;
}
.info span { display: flex; align-items: center; }
.info span svg { width: 24px; height: 24px; }
.dot { width: 24px; height: 24px; border-radius: 50%; background: #78b159; }
.dot.lack { background: #dd2e44; }
.dot.hide { background: #c1694f; }

.make {
  width: 88px;
  height: 55px;
  padding-bottom: 8px;
  background: #2fc98a;
  box-shadow: inset 0 -6px #268a60;
  color: #fff;
}
.make:disabled { background: #4b545d; box-shadow: none; color: #71767c; }

/* Crafting stations */
.station {
  display: flex;
  align-items: center;
  gap: 7px;
  margin: 8px 0 4px;
  height: 67px;
  padding: 0 8px;
  border-radius: 4px;
  background: #1e2b24;
  color: #43d42f;
}
.station h2 { font-size: 35px; line-height: 67px; white-space: pre; }
.station h2 svg { width: 35px; height: 35px; vertical-align: -5px; }
.toggle { width: 65px; height: 44px; }
.toggle svg { width: 28px; height: 25px; }

.locked .station { margin-bottom: 0; background: #1c1b1f; color: #66667a; }
.locked + .locked .station { margin-top: 0; }
.note {
  padding-left: 14px;
  color: #66667a;
  font-size: 30px;
  line-height: 67px;
}
.note svg { width: 30px; height: 30px; vertical-align: -5px; }

/* Bottom tabs */
.tabs {
  flex: none;
  display: grid;
  grid-template-columns: repeat(5, 1fr);
  gap: 4px;
  padding: 0 4px 4px;
  border-top: 4px solid #6a3050;
  border-radius: 24px;
  background: #141c35;
}
.tabs .btn { height: 77px; padding-bottom: 10px; }
.tabs svg { width: 30px; height: 30px; }
.tabs .active { background: #5ac3f5; box-shadow: inset 0 -6px #428aad; color: #fff; }

/* Floating overlays */
.capsule {
  position: absolute;
  top: 187px;
  right: 33px;
  display: grid;
  grid-template-columns: 1fr 1fr;
  align-items: center;
  width: 223px;
  height: 88px;
  border: 3px solid rgba(255, 255, 255, .25);
  border-radius: 44px;
  background: rgba(0, 0, 0, .42);
}
.capsule button {
  display: flex;
  align-items: center;
  justify-content: center;
  height: 55px;
  border: 0;
  background: none;
}
.capsule button:first-child { border-right: 3px solid rgba(255, 255, 255, .25); }

.assist {
  position: absolute;
  top: 279px;
  left: 0;
  border: 0;
  background: none;
}
.assist svg { display: block; width: 132px; height: 133px; }

.shade {
  position: absolute;
  bottom: 85px;
  left: 0;
  width: 101px;
  height: 86px;
  border-radius: 14px;
  background: rgba(0, 0, 0, .75);
}
```
